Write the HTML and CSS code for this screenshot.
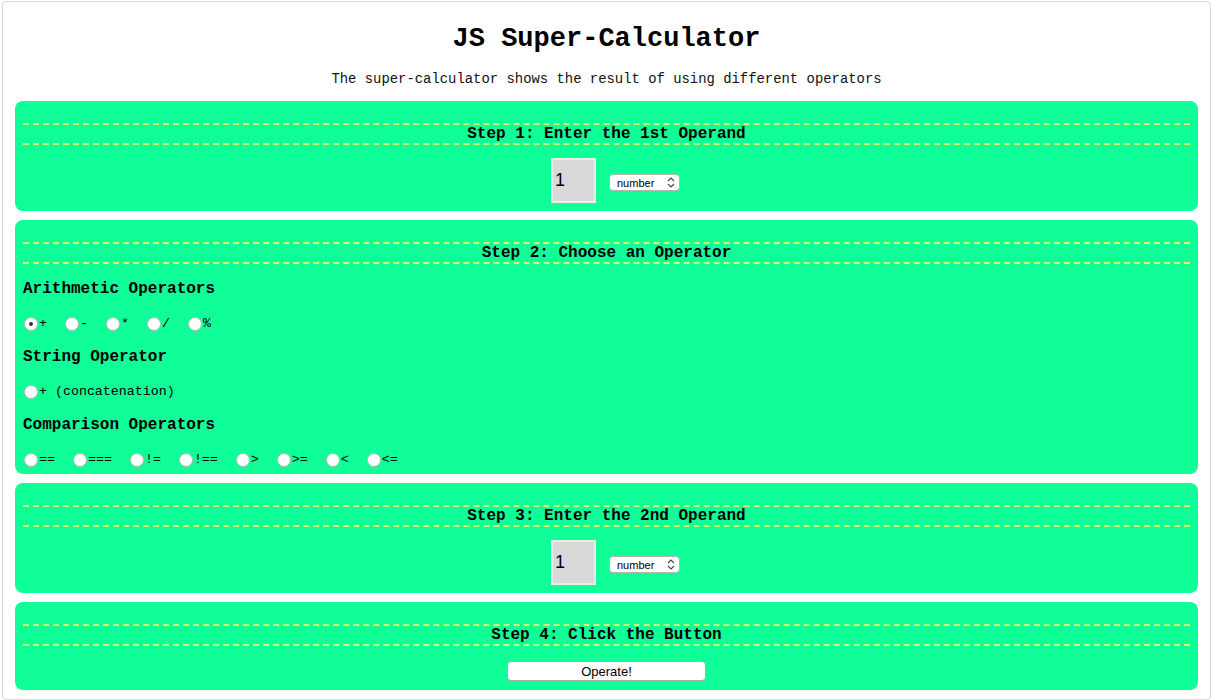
FILE: index.html
```html
<!DOCTYPE html>
<html lang="en">
<head>
<meta charset="utf-8">
<title>JS Super-Calculator</title>
<link rel="stylesheet" href="styles.css">
</head>
<body>
<div class="page">
  <h1 class="title">JS Super-Calculator</h1>
  <p class="subtitle">The super-calculator shows the result of using different operators</p>

  <section class="panel">
    <h3 class="step">Step 1: Enter the 1st Operand</h3>
    <div class="operand">
      <input class="num" type="text" value="1">
      <span class="select-wrap">
        <select class="type"><option>number</option><option>string</option></select>
        <svg class="chev" width="8" height="11" viewBox="0 0 8 11"><path d="M1 4 L4 1 L7 4 M1 7 L4 10 L7 7" fill="none" stroke="#444" stroke-width="1.1"/></svg>
      </span>
    </div>
  </section>

  <section class="panel panel-ops">
    <h3 class="step">Step 2: Choose an Operator</h3>
    <h4 class="group">Arithmetic Operators</h4>
    <div class="radios">
      <label class="opt"><input type="radio" name="op" checked><span>+</span></label>
      <label class="opt"><input type="radio" name="op"><span>-</span></label>
      <label class="opt"><input type="radio" name="op"><span>*</span></label>
      <label class="opt"><input type="radio" name="op"><span>/</span></label>
      <label class="opt"><input type="radio" name="op"><span>%</span></label>
    </div>
    <h4 class="group">String Operator</h4>
    <div class="radios">
      <label class="opt"><input type="radio" name="op"><span>+ (concatenation)</span></label>
    </div>
    <h4 class="group">Comparison Operators</h4>
    <div class="radios">
      <label class="opt"><input type="radio" name="op"><span>==</span></label>
      <label class="opt"><input type="radio" name="op"><span>===</span></label>
      <label class="opt"><input type="radio" name="op"><span>!=</span></label>
      <label class="opt"><input type="radio" name="op"><span>!==</span></label>
      <label class="opt"><input type="radio" name="op"><span>&gt;</span></label>
      <label class="opt"><input type="radio" name="op"><span>&gt;=</span></label>
      <label class="opt"><input type="radio" name="op"><span>&lt;</span></label>
      <label class="opt"><input type="radio" name="op"><span>&lt;=</span></label>
    </div>
  </section>

  <section class="panel">
    <h3 class="step">Step 3: Enter the 2nd Operand</h3>
    <div class="operand">
      <input class="num" type="text" value="1">
      <span class="select-wrap">
        <select class="type"><option>number</option><option>string</option></select>
        <svg class="chev" width="8" height="11" viewBox="0 0 8 11"><path d="M1 4 L4 1 L7 4 M1 7 L4 10 L7 7" fill="none" stroke="#444" stroke-width="1.1"/></svg>
      </span>
    </div>
  </section>

  <section class="panel panel-last">
    <h3 class="step">Step 4: Click the Button</h3>
    <div class="action">
      <button class="go" type="button">Operate!</button>
    </div>
  </section>
</div>
</body>
</html>
```

FILE: styles.css
```css
html, body {
  margin: 0;
  padding: 0;
  background: #ffffff;
}

body {
  padding: 1px 2px 0 2px;
  font-family: "Liberation Mono", "Courier New", monospace;
  color: #000;
}

.page {
  box-sizing: border-box;
  border: 1px solid #d8d8d8;
  border-radius: 4px;
  padding: 21px 12px 0 12px;
  min-height: 699px;
}

.title {
  margin: 0;
  text-align: center;
  font-size: 27px;
  line-height: 32px;
  font-weight: bold;
}

.subtitle {
  margin: 16px 0 14px 0;
  text-align: center;
  font-size: 13.9px;
  line-height: 16px;
  color: #111;
}

.panel {
  background: #10fe98;
  border-radius: 8px;
  padding: 22px 8px 8px 8px;
  margin-bottom: 9px;
}

.step {
  margin: 0;
  border-top: 2px dashed #d0f46a;
  border-bottom: 2px dashed #d0f46a;
  text-align: center;
  font-size: 16px;
  line-height: 18px;
  padding: 0;
  font-weight: bold;
}

.operand {
  display: flex;
  align-items: center;
  justify-content: center;
  gap: 13px;
  margin-top: 13px;
  padding-left: 18px;
}

.num {
  box-sizing: border-box;
  width: 45px;
  height: 45px;
  margin: 0;
  padding: 0 0 0 2px;
  background: #d9d9d9;
  border: 2px solid #ececec;
  font-family: "Liberation Sans", Arial, sans-serif;
  font-size: 18px;
  color: #000;
  outline: none;
}

.select-wrap {
  position: relative;
  display: inline-flex;
  margin-top: 4px;
}

.type {
  -webkit-appearance: none;
  appearance: none;
  box-sizing: border-box;
  width: 71px;
  height: 17px;
  margin: 0;
  padding: 0 0 0 7px;
  background: #fff;
  border: 1px solid #b5b5b5;
  border-radius: 4px;
  font-family: "Liberation Sans", Arial, sans-serif;
  font-size: 11px;
  color: #000;
}

.chev {
  position: absolute;
  right: 5px;
  top: 3px;
  pointer-events: none;
}

.panel-ops {
  padding-bottom: 6px;
}

.group {
  margin: 15px 0 16px 0;
  font-size: 16px;
  line-height: 20px;
  font-weight: bold;
}

.radios {
  display: flex;
  align-items: center;
  height: 17px;
  gap: 17px;
}

.opt {
  display: inline-flex;
  align-items: center;
  font-size: 13.3px;
  line-height: 16px;
}

.opt input {
  -webkit-appearance: none;
  appearance: none;
  box-sizing: border-box;
  width: 14px;
  height: 14px;
  margin: 0 1px 0 1px;
  border-radius: 50%;
  background: #fff;
  border: 1px solid #b9b9b9;
  display: inline-grid;
  place-content: center;
}

.opt input:checked::after {
  content: "";
  width: 4px;
  height: 4px;
  border-radius: 50%;
  background: #333;
}

.action {
  display: flex;
  justify-content: center;
  margin-top: 15px;
}

.go {
  box-sizing: border-box;
  width: 199px;
  height: 20px;
  margin: 0;
  padding: 0;
  background: #fff;
  border: 1px solid #a9a9a9;
  border-radius: 4px;
  font-family: "Liberation Sans", Arial, sans-serif;
  font-size: 13px;
  color: #000;
}

.panel-last {
  padding-bottom: 9px;
  margin-bottom: 0;
}
```
